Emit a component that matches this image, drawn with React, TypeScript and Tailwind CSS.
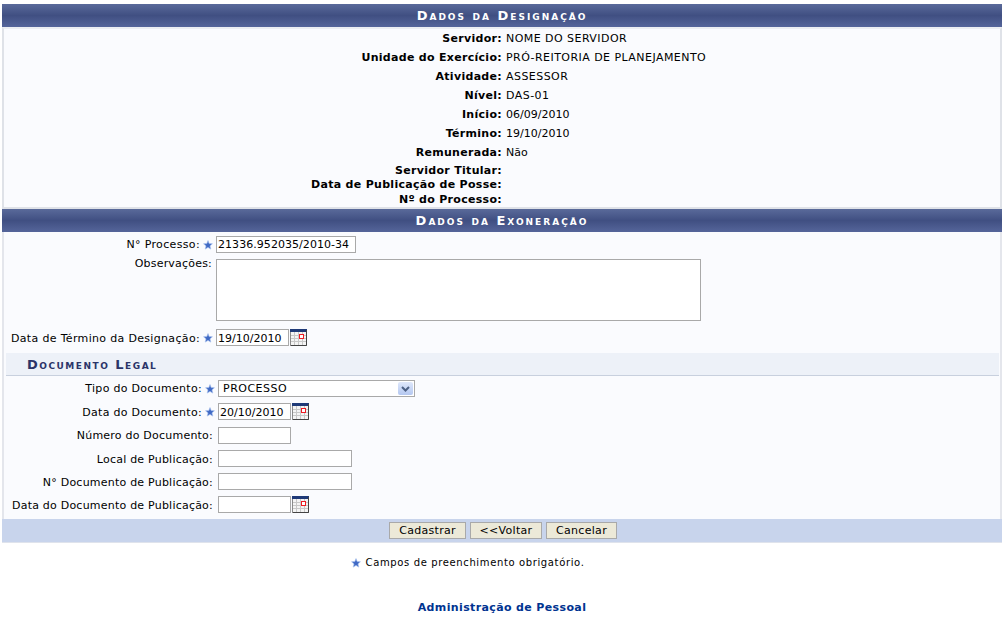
import React from 'react';

const Star = () => (
  <svg width="10" height="10" viewBox="0 0 10 10" className="shrink-0">
    <path d="M5 0.6 L6.2 3.6 L9.4 3.8 L7 5.9 L7.8 9.1 L5 7.4 L2.2 9.1 L3 5.9 L0.6 3.8 L3.8 3.6 Z" fill="#3f69c4" stroke="#a9c2ee" strokeWidth="0.7" />
  </svg>
);

const Calendar = () => (
  <svg width="17" height="17" viewBox="0 0 17 17" className="shrink-0">
    <rect x="0.5" y="0.5" width="16" height="16" fill="#f4f4f4" stroke="#8a8a8a" />
    <rect x="0" y="0" width="17" height="3" fill="#1f3a78" />
    <path d="M1 6.5H16M1 9.5H16M1 12.5H16M4.5 3V16M8.5 3V16M12.5 3V16" stroke="#c8c8c8" strokeWidth="1" />
    <rect x="9.5" y="5.5" width="4" height="4" fill="#fff" stroke="#ee1c24" />
    <path d="M16.5 1V16.5H1" fill="none" stroke="#444" />
  </svg>
);

const Caption = ({ children }: { children: string }) => (
  <div className="h-[23px] flex items-center justify-center bg-gradient-to-b from-[#5a6a9a] via-[#404f82] to-[#55659a] text-white font-bold text-[13px] tracking-[2px] [font-variant:small-caps]">
    {children}
  </div>
);

const Info = ({ label, value, caps, h = 'h-[19px]' }: { label: string; value?: string; caps?: boolean; h?: string }) => (
  <div className={`grid grid-cols-[498px_1fr] items-center ${h}`}>
    <span className="font-bold text-right tracking-[0.3px]">{label}</span>
    <span className={caps ? 'pl-1 tracking-[0.45px]' : 'pl-1'}>{value}</span>
  </div>
);

const inputCls = 'border border-[#a9a9a9] bg-white h-[17px] px-[1px] pt-[2px] flex items-center text-[11px] text-black';

const Row = ({ label, width, calendar, h = 'h-[23.3px]' }: { label: string; width: string; calendar?: boolean; h?: string }) => (
  <div className={`grid grid-cols-[214px_1fr] items-center ${h}`}>
    <span className="text-right pr-[5px] pt-[3px] tracking-[0.22px]">{label}</span>
    <div className="flex items-center gap-[1px]">
      <div className={`${inputCls} ${width}`} />
      {calendar && <Calendar />}
    </div>
  </div>
);

const StarLabel = ({ children, tracking = 'tracking-[0.3px]', pad = 'pt-[2px]' }: { children: string; tracking?: string; pad?: string }) => (
  <span className="flex items-center justify-end gap-[3px] pr-[3px] h-[17px]">
    <span className={`${pad} ${tracking}`}>{children}</span> <Star />
  </span>
);

const Btn = ({ w, children }: { w: string; children: React.ReactNode }) => (
  <button className={`${w} h-[17px] bg-[#ece9d8] border border-[#a9a9a9] flex items-center justify-center pt-[2px] text-[11px] tracking-[0.3px]`}>{children}</button>
);

export default function App() {
  return (
    <div className="h-[619px] bg-white text-[11px] text-black overflow-hidden font-['DejaVu_Sans',Verdana,sans-serif]">
      <div className="pt-[4px] pl-[2px] pr-[5px]">
        <Caption>Dados da Designação</Caption>
        <div className="bg-[#fafbfe] border-x-2 border-b-2 border-t-2 border-[#dfe2e8] border-t-[#eceef2] h-[182px] pt-[1px]">
          <Info label="Servidor:" value="NOME DO SERVIDOR" caps />
          <Info label="Unidade do Exercício:" value="PRÓ-REITORIA DE PLANEJAMENTO" caps />
          <Info label="Atividade:" value="ASSESSOR" caps />
          <Info label="Nível:" value="DAS-01" caps />
          <Info label="Início:" value="06/09/2010" />
          <Info label="Término:" value="19/10/2010" />
          <Info label="Remunerada:" value="Não" />
          <Info label="Servidor Titular:" h="h-[14px] pb-[2px]" />
          <Info label="Data de Publicação de Posse:" h="h-[15px]" />
          <Info label="Nº do Processo:" h="h-[15px]" />
        </div>
        <Caption>Dados da Exoneração</Caption>
        <div className="bg-[#fafbfe] border-x-2 border-[#e4e6ec] h-[287px]">
          <div className="grid grid-cols-[212px_1fr] pt-[4px]">
            <div className="flex flex-col items-end">
              <StarLabel tracking="tracking-[0.35px]">N° Processo:</StarLabel>
              <span className="mt-[3px] h-[15px] pr-[4px] tracking-[0.2px]">Observações:</span>
            </div>
            <div className="flex flex-col gap-[6px]">
              <div className={`${inputCls} w-[140px] tracking-[0.05px]`}>21336.952035/2010-34</div>
              <div className="w-[485px] h-[62px] border border-[#a9a9a9] bg-white" />
            </div>
          </div>
          <div className="grid grid-cols-[212px_1fr] mt-[8px] h-[17px] items-center">
            <StarLabel tracking="tracking-[0.33px]" pad="pt-[4px]">Data de Término da Designação:</StarLabel>
            <div className="flex items-center gap-[1px]">
              <div className={`${inputCls} w-[73px]`}><span className="pt-[2px]">19/10/2010</span></div>
              <Calendar />
            </div>
          </div>
          <div className="mt-[7px] mx-[2px] mr-[1px] h-[23px] pl-[21px] pt-[1px] flex items-center bg-[#edf1f8] border-b border-[#c8d0de] text-[#2b3468] font-bold text-[13px] tracking-[1.5px] [font-variant:small-caps]">
            Documento Legal
          </div>
          <div className="pt-[1px]">
            <div className="grid grid-cols-[214px_1fr] items-center h-[23.3px]">
              <StarLabel>Tipo do Documento:</StarLabel>
              <div className="w-[197px] h-[17px] border border-[#a9a9a9] bg-white flex items-center justify-between pl-[4px] pr-[1px] tracking-[0.5px]">
                <span className="pt-[2px]">PROCESSO</span>
                <span className="w-[15px] h-[13px] rounded-[2px] bg-gradient-to-b from-[#dfe8fb] to-[#b4c7f0] flex items-center justify-center">
                  <svg width="9" height="6" viewBox="0 0 9 6"><path d="M1 1 L4.5 4.5 L8 1" fill="none" stroke="#4d6185" strokeWidth="2" /></svg>
                </span>
              </div>
            </div>
            <div className="grid grid-cols-[214px_1fr] items-center h-[23.3px]">
              <StarLabel>Data do Documento:</StarLabel>
              <div className="flex items-center gap-[1px]">
                <div className={`${inputCls} w-[73px]`}>20/10/2010</div>
                <Calendar />
              </div>
            </div>
            <Row label="Número do Documento:" width="w-[73px]" />
            <Row label="Local de Publicação:" width="w-[134px]" />
            <Row label="N° Documento de Publicação:" width="w-[134px]" h="h-[23px]" />
            <Row label="Data do Documento de Publicação:" width="w-[73px]" calendar />
          </div>
        </div>
        <div className="h-[24px] bg-[#c8d4ec] border-b border-[#dfe3ec] flex items-center justify-center gap-[4px] pl-[2px]">
          <Btn w="w-[77px]">Cadastrar</Btn>
          <Btn w="w-[72px]">{'<<Voltar'}</Btn>
          <Btn w="w-[71px]">Cancelar</Btn>
        </div>
        <div className="mt-[13px] flex items-center justify-center gap-[5px] text-[10px] tracking-[0.63px] h-[13px] pr-[69px]">
          <Star /> Campos de preenchimento obrigatório.
        </div>
        <div className="mt-[31px] text-center font-bold text-[#003390] tracking-[0.37px]">Administração de Pessoal</div>
      </div>
    </div>
  );
}
